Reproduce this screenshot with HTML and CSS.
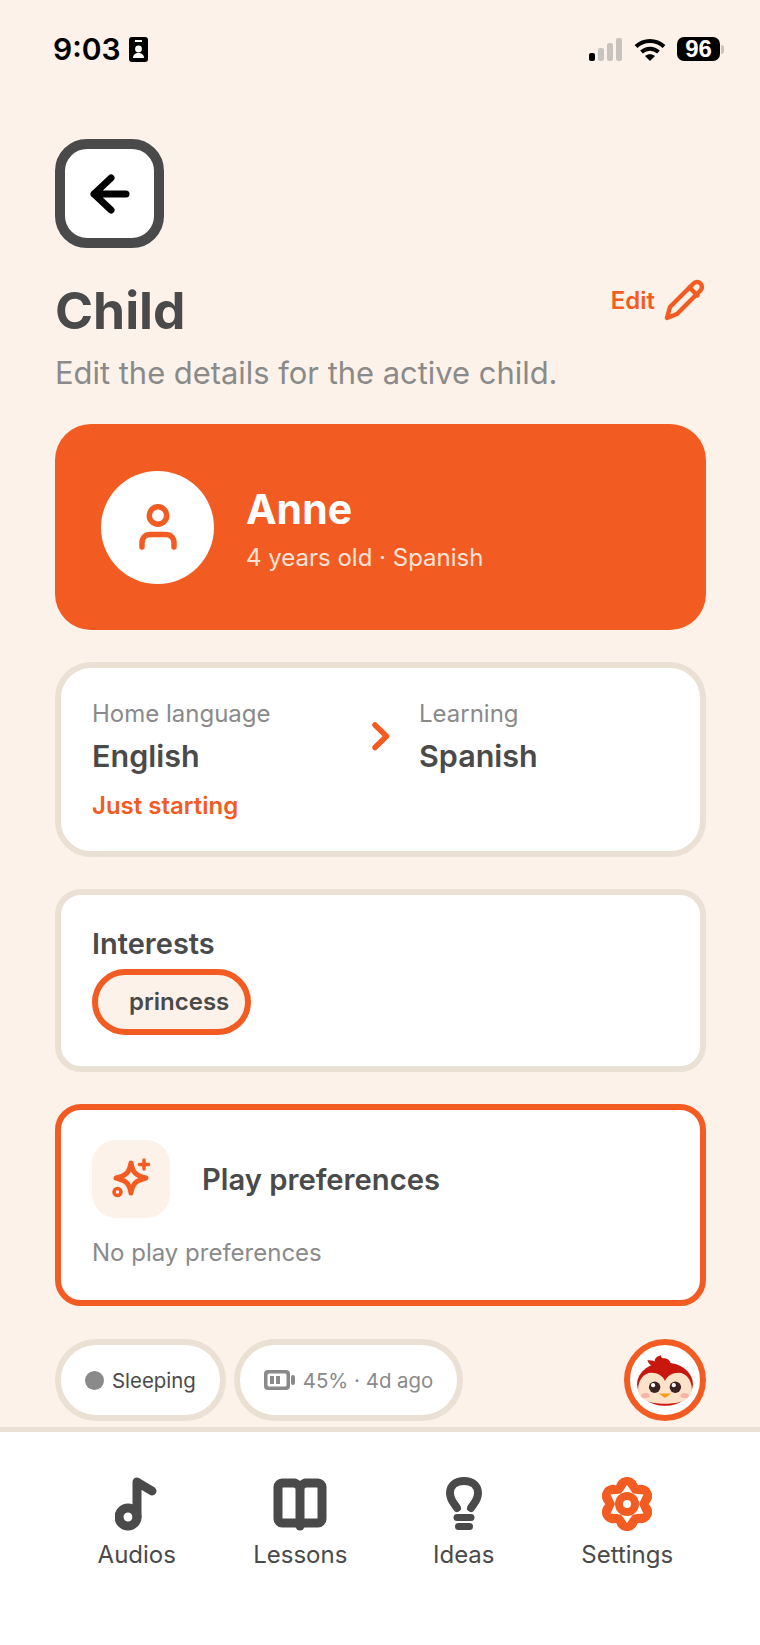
FILE: index.html
```html
<!DOCTYPE html>
<html lang="en">
<head>
    <meta charset="UTF-8">
    <meta name="viewport" content="width=device-width, initial-scale=1.0">
    <title>Child</title>
    <link rel="stylesheet" href="styles.css">
</head>
<body>
    <div class="status-bar">
        <div class="status-left">
            <span class="status-time">9:03</span>
            <svg class="status-id" width="19" height="25" viewBox="0 0 19 25">
                <rect width="19" height="25" rx="3" fill="#000"/>
                <rect x="6" y="3" width="7" height="2" fill="#fff"/>
                <circle cx="9.500" cy="12" r="3.400" fill="#fff"/>
                <path d="M4 21c0-3.500 2.500-5 5.500-5s5.500 1.500 5.500 5z" fill="#fff"/>
            </svg>
        </div>
        <div class="status-right">
            <svg width="34" height="23" viewBox="0 0 34 23">
                <rect x="0" y="15" width="6" height="8" rx="2" fill="#000"/>
                <rect x="9" y="10" width="6" height="13" rx="2" fill="#c9c3be"/>
                <rect x="18" y="5" width="6" height="18" rx="2" fill="#c9c3be"/>
                <rect x="27" y="0" width="6" height="23" rx="2" fill="#c9c3be"/>
            </svg>
            <svg width="32" height="23" viewBox="0 0 32 23" fill="none" stroke="#000" stroke-width="4">
                <path d="M2 8.500c8-7.500 20-7.500 28 0"/>
                <path d="M7.500 14c5-4.500 12-4.500 17 0"/>
                <path d="M16 23l-5-5c3-2.500 7-2.500 10 0z" fill="#000" stroke="none"/>
            </svg>
            <div class="status-battery">
                <span class="status-battery-body">96</span>
                <span class="status-battery-nub"></span>
            </div>
        </div>
    </div>

    <main class="content">
        <button class="back-button">
            <svg width="44" height="44" viewBox="0 0 44 44" fill="none" stroke="#000" stroke-width="7" stroke-linecap="round" stroke-linejoin="round">
                <path d="M38 22H6M23 6L6 22l17 16"/>
            </svg>
        </button>

        <div class="page-head">
            <h1>Child</h1>
            <a class="edit-link">
                <span>Edit</span>
                <svg width="42" height="42" viewBox="0 0 42 42" fill="none" stroke="#f25c22" stroke-width="4.500" stroke-linejoin="round" stroke-linecap="round">
                    <path d="M3 39l3-11L29 5c2.500-2.500 5.500-2.500 7.500-.5s2 5-.5 7.500L13 35z"/>
                    <path d="M25.500 8.500l8 8"/>
                </svg>
            </a>
        </div>
        <p class="page-sub">Edit the details for the active child.</p>

        <section class="hero-card">
            <div class="hero-avatar">
                <svg width="44" height="46" viewBox="0 0 44 46" fill="none" stroke="#f25c22" stroke-width="5.500" stroke-linecap="round">
                    <circle cx="22" cy="11.500" r="8.700"/>
                    <path d="M6 43v-4c0-5 3-8.500 8.500-8.500h15c5.500 0 8.500 3.500 8.500 8.500v4"/>
                </svg>
            </div>
            <div class="hero-text">
                <div class="hero-name">Anne</div>
                <div class="hero-meta">4 years old · Spanish</div>
            </div>
        </section>

        <section class="card language-card">
            <div class="language-row">
                <div class="language-col">
                    <div class="muted">Home language</div>
                    <div class="language-name">English</div>
                </div>
                <svg class="language-arrow" width="20" height="29" viewBox="0 0 20 29" fill="none" stroke="#f25c22" stroke-width="5.500" stroke-linecap="round" stroke-linejoin="round">
                    <path d="M3 3l11.500 11.250L3 25.500"/>
                </svg>
                <div class="language-col">
                    <div class="muted">Learning</div>
                    <div class="language-name">Spanish</div>
                </div>
            </div>
            <div class="language-level">Just starting</div>
        </section>

        <section class="card interests-card">
            <h2>Interests</h2>
            <span class="interest-chip">princess</span>
        </section>

        <section class="card play-card">
            <div class="play-head">
                <div class="play-icon">
                    <svg width="44" height="44" viewBox="-2 0 44 44" fill="none" stroke="#f25c22" stroke-width="5" stroke-linejoin="round" stroke-linecap="round">
                        <path d="M20 6c1.500 9 4.500 12.500 15 15-10.500 2.500-13.500 6-15 15-1.500-9-4.500-12.500-15-15 10.500-2.500 13.500-6 15-15z"/>
                        <path d="M33 3v9M28.500 7.500h9" stroke-width="3.500"/>
                        <circle cx="6.500" cy="35" r="3.500" stroke-width="3.500"/>
                    </svg>
                </div>
                <h2>Play preferences</h2>
            </div>
            <p class="muted">No play preferences</p>
        </section>

        <div class="device-row">
            <div class="pill">
                <span class="pill-dot"></span>
                <span class="pill-dark">Sleeping</span>
            </div>
            <div class="pill">
                <svg width="31" height="20" viewBox="0 0 31 20">
                    <rect x="0" y="0" width="26" height="20" rx="4" fill="#8a8a8a"/>
                    <rect x="3.500" y="3.500" width="19" height="13" rx="1.500" fill="#fff"/>
                    <rect x="6" y="6" width="4" height="8" fill="#8a8a8a"/>
                    <rect x="12" y="6" width="4" height="8" fill="#8a8a8a"/>
                    <rect x="27" y="5" width="4" height="10" rx="2" fill="#8a8a8a"/>
                </svg>
                <span class="pill-muted">45% · 4d ago</span>
            </div>
            <div class="mascot">
                <svg width="60" height="60" viewBox="0 0 58 58">
                    <path d="M18 16c-3-1-5-3-6-6 3 0 5 0 7 1 0-3 2-5 6-6 0 2 1 3 3 3 3 0 6 2 7 6z" fill="#c8170d"/>
                    <ellipse cx="29" cy="33" rx="27" ry="21" fill="#c8170d"/>
                    <path d="M29 30c2-5 7-8 13-8 8 0 13 8 13 16 0 10-11 14-26 14S3 48 3 38c0-8 5-16 13-16 6 0 11 3 13 8z" fill="#fbe2c8"/>
                    <circle cx="19" cy="36" r="5.500" fill="#3a2320"/>
                    <circle cx="39" cy="36" r="5.500" fill="#3a2320"/>
                    <circle cx="17.500" cy="34" r="2" fill="#fff"/>
                    <circle cx="37.500" cy="34" r="2" fill="#fff"/>
                    <ellipse cx="10" cy="44" rx="4" ry="2.500" fill="#f6b3a8"/>
                    <ellipse cx="48" cy="44" rx="4" ry="2.500" fill="#f6b3a8"/>
                    <path d="M23 42h12l-6 4.500z" fill="#f59a1c"/>
                </svg>
            </div>
        </div>
    </main>

    <nav class="tab-bar">
        <div class="tab">
            <svg width="44" height="54" viewBox="2 0 44 54" fill="none" stroke="#4a4a4a" stroke-width="9" stroke-linecap="round" stroke-linejoin="round">
                <circle cx="15" cy="40" r="9"/>
                <path d="M24 40V5l15 9"/>
            </svg>
            <span>Audios</span>
        </div>
        <div class="tab">
            <svg width="54" height="54" viewBox="0 0 54 54" fill="none" stroke="#4a4a4a" stroke-width="9" stroke-linecap="round" stroke-linejoin="round">
                <path d="M27 46H9c-2 0-4-2-4-4V10c0-2 2-4 4-4h13l5 3 5-3h13c2 0 4 2 4 4v32c0 2-2 4-4 4z"/>
                <path d="M27 9v40"/>
            </svg>
            <span>Lessons</span>
        </div>
        <div class="tab">
            <svg width="36" height="54" viewBox="0 0 36 54" fill="none" stroke="#4a4a4a" stroke-linecap="round" stroke-linejoin="round">
                <path d="M11 31C9 27 4 24 4 16 4 8 10 4 18 4s14 4 14 12c0 8-5 11-7 15" stroke-width="8"/>
                <path d="M11 40.500h14" stroke-width="7"/>
                <path d="M12.500 49.500h11" stroke-width="7"/>
            </svg>
            <span>Ideas</span>
        </div>
        <div class="tab tab-active">
            <svg width="50" height="54" viewBox="0 0 50 54">
                <path d="M42 27A8.600 8.600 0 1 1 33.500 41.700 8.600 8.600 0 1 1 16.500 41.700 8.600 8.600 0 1 1 8 27 8.600 8.600 0 1 1 16.500 12.300 8.600 8.600 0 1 1 33.500 12.300 8.600 8.600 0 1 1 42 27z" fill="#f25c22" stroke="#f25c22" stroke-width="5" stroke-linejoin="round"/>
                <path d="M25 8L31 16.600 41.500 17.500 37 27 41.500 36.500 31 37.400 25 46 19 37.400 8.500 36.500 13 27 8.500 17.500 19 16.600z" fill="#fff"/>
                <circle cx="25" cy="27" r="12" fill="#f25c22"/>
                <circle cx="25" cy="27" r="4" fill="#fff"/>
            </svg>
            <span>Settings</span>
        </div>
    </nav>
</body>
</html>
```

FILE: styles.css
```css
* {
    box-sizing: border-box;
}
body {
    margin: 0;
    height: 1645px;
    display: flex;
    flex-direction: column;
    overflow: hidden;
    font-family: Inter, "Noto Sans", sans-serif;
    background: #fdf2e9;
    color: #4a4a4a;
}
h1, h2, p {
    margin: 0;
}
.status-bar {
    height: 139px;
    padding: 36px 36px 0 53px;
    display: flex;
    justify-content: space-between;
    align-items: flex-start;
}
.status-left, .status-right {
    display: flex;
    align-items: center;
    height: 26px;
}
.status-left {
    gap: 8px;
}
.status-right {
    gap: 11px;
}
.status-time {
    font-size: 30px;
    font-weight: 600;
    color: #000;
}
.status-battery {
    display: flex;
    align-items: center;
    gap: 1px;
}
.status-battery-body {
    width: 43px;
    height: 24px;
    border-radius: 7px;
    background: #000;
    color: #fff;
    font-family: "Liberation Sans", sans-serif;
    font-size: 24px;
    font-weight: 700;
    line-height: 24px;
    text-align: center;
}
.status-battery-nub {
    width: 3px;
    height: 9px;
    border-radius: 0 3px 3px 0;
    background: #c9c3be;
}
.content {
    flex: 1;
    padding: 0 54px 0 55px;
}
.back-button {
    display: flex;
    align-items: center;
    justify-content: center;
    width: 109px;
    height: 109px;
    padding: 0;
    background: #fff;
    border: 10px solid #4a4a4a;
    border-radius: 32px;
}
.page-head {
    display: flex;
    justify-content: space-between;
    align-items: flex-start;
    margin-top: 30px;
}
h1 {
    font-size: 51.500px;
    font-weight: 700;
    line-height: 64px;
}
.edit-link {
    display: flex;
    align-items: center;
    gap: 9px;
    color: #f25c22;
    font-size: 24px;
    font-weight: 600;
    margin-top: 1px;
}
.page-sub {
    margin-top: 12px;
    font-size: 30.900px;
    line-height: 38px;
    color: #8a8a8a;
}
.hero-card {
    display: flex;
    align-items: center;
    gap: 32px;
    height: 206px;
    margin-top: 32px;
    padding: 0 46px;
    background: #f25c22;
    border-radius: 36px;
    color: #fff;
}
.hero-avatar {
    display: flex;
    align-items: center;
    justify-content: center;
    width: 113px;
    height: 113px;
    border-radius: 50%;
    background: #fff;
}
.hero-text {
    padding-top: 4px;
}
.hero-name {
    font-size: 41px;
    font-weight: 700;
    line-height: 48px;
}
.hero-meta {
    margin-top: 10px;
    font-size: 24px;
    line-height: 30px;
    color: #fde3d6;
}
.card {
    margin-top: 32px;
    background: #fff;
    border: 6px solid #ebe0d4;
    border-radius: 36px;
    padding: 0 31px;
}
.muted {
    font-size: 24px;
    line-height: 30px;
    color: #8a8a8a;
}
.language-card {
    height: 195px;
    padding-top: 31px;
}
.language-row {
    display: flex;
    align-items: flex-start;
}
.language-col {
    width: 277px;
}
.language-col:last-child {
    width: auto;
}
.language-name {
    margin-top: 7px;
    font-size: 30.500px;
    font-weight: 600;
    line-height: 40px;
}
.language-arrow {
    margin: 23px 27px 0 3px;
}
.language-level {
    margin-top: 15px;
    font-size: 24px;
    font-weight: 600;
    line-height: 30px;
    color: #f25c22;
}
.interests-card {
    height: 183px;
    padding-top: 31px;
    border-radius: 26px;
}
.interests-card h2 {
    font-size: 29px;
    font-weight: 600;
    line-height: 36px;
}
.interest-chip {
    display: inline-block;
    height: 66px;
    margin-top: 7px;
    padding: 0 16px 0 31px;
    background: #fdf2e9;
    border: 6px solid #f25c22;
    border-radius: 33px;
    font-size: 24px;
    font-weight: 600;
    line-height: 54px;
}
.play-card {
    height: 202px;
    padding-top: 30px;
    border-color: #f25c22;
    border-radius: 26px;
}
.play-head {
    display: flex;
    align-items: center;
    gap: 32px;
}
.play-icon {
    display: flex;
    align-items: center;
    justify-content: center;
    width: 78px;
    height: 78px;
    border-radius: 24px;
    background: #fdf2e9;
}
.play-head h2 {
    font-size: 29.200px;
    font-weight: 600;
}
.play-card .muted {
    margin-top: 20px;
}
.device-row {
    display: flex;
    align-items: center;
    gap: 8px;
    margin-top: 33px;
}
.pill {
    display: flex;
    align-items: center;
    gap: 8px;
    height: 82px;
    padding: 0 24px;
    background: #fff;
    border: 6px solid #ebe0d4;
    border-radius: 41px;
    font-size: 20.400px;
}
.pill-dot {
    width: 19px;
    height: 19px;
    border-radius: 50%;
    background: #8a8a8a;
}
.pill-dark {
    color: #4a4a4a;
}
.pill-muted {
    color: #8a8a8a;
}
.mascot {
    display: flex;
    align-items: center;
    justify-content: center;
    width: 82px;
    height: 82px;
    margin-left: auto;
    background: #fff;
    border: 6px solid #f25c22;
    border-radius: 50%;
}
.tab-bar {
    display: grid;
    grid-template-columns: repeat(4, 1fr);
    height: 218px;
    padding: 45px 51px 0 55px;
    background: #fff;
    border-top: 5px solid #ebe0d4;
}
.tab {
    display: flex;
    flex-direction: column;
    align-items: center;
    font-size: 24px;
    color: #4a4a4a;
}
.tab span {
    margin-top: 9px;
    line-height: 30px;
}
```
